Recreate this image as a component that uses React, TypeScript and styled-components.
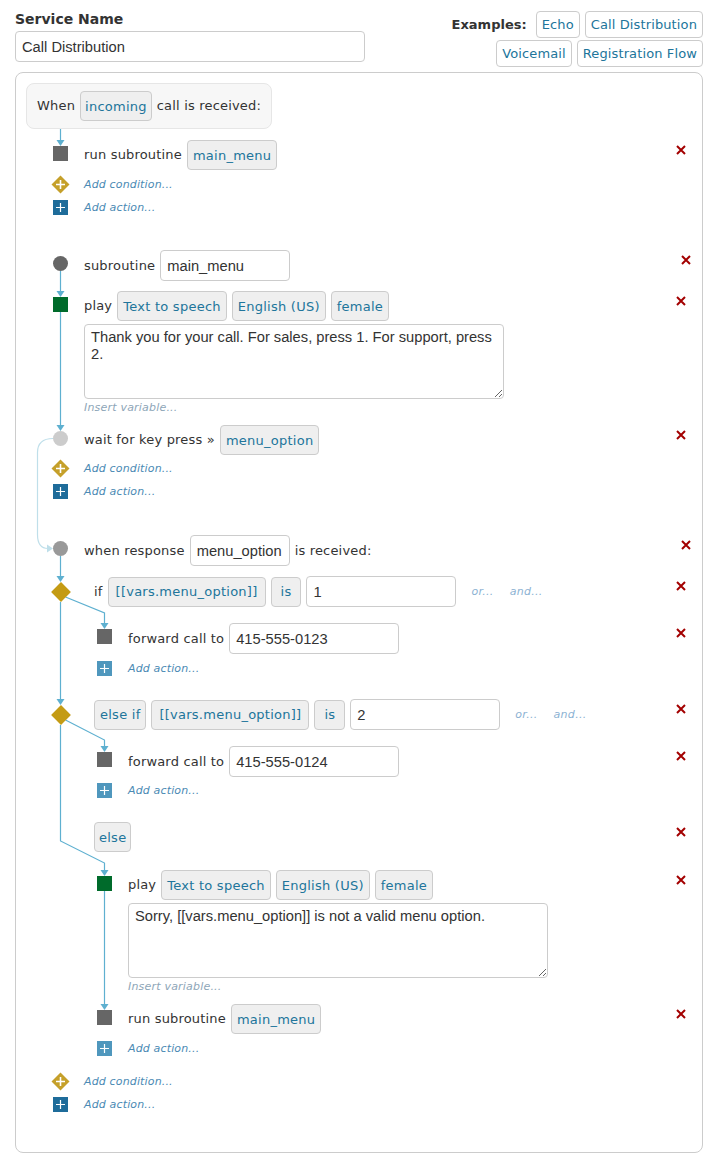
import { useLayoutEffect, useRef, useState } from 'react';
import styled, { createGlobalStyle } from 'styled-components';

type Box = { cx: number; cy: number; top: number; bottom: number; left: number; right: number };
type Wire = { d: string; light?: boolean; solid?: boolean };

const LINE = '#5eb0d0';
const LOOP = '#bfdfea';

const RemoveButton = ({ $r = 6 }: { $r?: number }) => (
  <Remove $r={$r}>
    <svg width="10" height="10" viewBox="0 0 10 10">
      <path d="M1 1L9 9M9 1L1 9" stroke="#a30000" strokeWidth="2" />
    </svg>
  </Remove>
);

const AddCondition = ({ left, mt }: { left: number; mt: number }) => (
  <AddRow $mt={mt}>
    <Slot $left={left} $right={11}>
      <svg width="19" height="19" viewBox="0 0 19 19">
        <polygon points="9.5,0.5 18.5,9.5 9.5,18.5 0.5,9.5" fill="#c5a02a" />
        <path d="M9.5 5V14M5 9.5H14" stroke="#fff" strokeWidth="1.6" />
      </svg>
    </Slot>
    <AddText>Add condition...</AddText>
  </AddRow>
);

const AddAction = ({ left, mt, pale }: { left: number; mt: number; pale?: boolean }) => (
  <AddRow $mt={mt}>
    <Slot $left={left} $right={11}>
      <svg width="15" height="15" viewBox="0 0 15 15">
        <rect width="15" height="15" fill={pale ? '#4f97bd' : '#1e6c9a'} />
        <path d="M7.5 3V12M3 7.5H12" stroke="#fff" strokeWidth="1.2" />
      </svg>
    </Slot>
    <AddText>Add action...</AddText>
  </AddRow>
);

const App = () => {
  const panelRef = useRef<HTMLDivElement>(null);
  const [wires, setWires] = useState<Wire[]>([]);

  useLayoutEffect(() => {
    const panel = panelRef.current;
    if (!panel) return;
    const base = panel.getBoundingClientRect();
    const ox = base.left + panel.clientLeft;
    const oy = base.top + panel.clientTop;
    const m = (id: string): Box => {
      const el = panel.querySelector(`[data-node="${id}"]`) as HTMLElement;
      const r = el.getBoundingClientRect();
      return {
        cx: r.left + r.width / 2 - ox,
        cy: r.top + r.height / 2 - oy,
        top: r.top - oy,
        bottom: r.bottom - oy,
        left: r.left - ox,
        right: r.right - ox,
      };
    };
    const px = (n: number) => Math.floor(n) + 0.5;
    const out: Wire[] = [];
    const arrow = (x: number, y: number) =>
      out.push({ d: `M${x - 4} ${y - 6}L${x + 4} ${y - 6}L${x} ${y}Z`, solid: true });
    const down = (a: Box, b: Box) => {
      const x = px(b.cx);
      out.push({ d: `M${x} ${a.bottom}V${b.top - 6}` });
      arrow(x, b.top);
    };
    const branch = (a: Box, b: Box, bend: number) => {
      const x = px(b.cx);
      out.push({ d: `M${a.cx + 5} ${a.cy + 5}L${x} ${bend}V${b.top - 6}` });
      arrow(x, b.top);
    };

    const trigger = m('trigger');
    const run1 = m('run1');
    out.push({ d: `M${px(run1.cx)} ${trigger.bottom}V${run1.top - 6}` });
    arrow(px(run1.cx), run1.top);

    const sub = m('sub');
    const play1 = m('play1');
    const wait = m('wait');
    const when = m('when');
    const if1 = m('if1');
    const fwd1 = m('fwd1');
    const elif = m('elif');
    const fwd2 = m('fwd2');
    const elseChip = m('else');
    const play2 = m('play2');
    const run2 = m('run2');

    down(sub, play1);
    down(play1, wait);

    const lx = wait.cx - 23;
    out.push({
      d: `M${wait.left} ${wait.cy}Q${lx} ${wait.cy} ${lx} ${wait.cy + 14}V${when.cy - 14}Q${lx} ${when.cy} ${when.left - 5} ${when.cy}`,
      light: true,
    });
    out.push({
      d: `M${when.left - 6} ${when.cy - 4}L${when.left - 6} ${when.cy + 4}L${when.left} ${when.cy}Z`,
      light: true,
      solid: true,
    });

    down(when, if1);
    branch(if1, fwd1, fwd1.top - 16);
    down(if1, elif);
    branch(elif, fwd2, fwd2.top - 12);

    const x0 = px(elif.cx);
    const x1 = px(play2.cx);
    const bend = elseChip.top + 19;
    out.push({ d: `M${x0} ${elif.bottom}V${bend}L${x1} ${play2.top - 13}V${play2.top - 6}` });
    arrow(x1, play2.top);
    down(play2, run2);

    setWires(out);
  }, []);

  return (
    <Page>
      <GlobalStyle />
      <Header>
        <NameColumn>
          <FieldLabel>Service Name</FieldLabel>
          <NameInput defaultValue="Call Distribution" />
        </NameColumn>
        <Examples>
          <ExamplesLabel>Examples:</ExamplesLabel>
          <ExampleButton>Echo</ExampleButton>
          <ExampleButton>Call Distribution</ExampleButton>
          <ExampleButton>Voicemail</ExampleButton>
          <ExampleButton>Registration Flow</ExampleButton>
        </Examples>
      </Header>

      <Panel ref={panelRef}>
        <Wires aria-hidden="true">
          {wires.map((w, i) => {
            const color = w.light ? LOOP : LINE;
            return (
              <path
                key={i}
                d={w.d}
                fill={w.solid ? color : 'none'}
                stroke={w.solid ? 'none' : color}
                strokeWidth={1.2}
              />
            );
          })}
        </Wires>

        <Trigger data-node="trigger">
          <Label>When</Label>
          <Chip $pad={4}>incoming</Chip>
          <Label>call is received:</Label>
        </Trigger>

        <Row $mt={11}>
          <Slot $left={27} $right={11} $top={6}>
            <Node $kind="square" data-node="run1" />
          </Slot>
          <Label>run subroutine</Label>
          <Chip>main_menu</Chip>
          <RemoveButton />
        </Row>
        <AddCondition left={27} mt={3} />
        <AddAction left={27} mt={0} />

        <Row $mt={31}>
          <Slot $left={27} $right={11} $top={6}>
            <Node $kind="circle" data-node="sub" />
          </Slot>
          <Label>subroutine</Label>
          <TextInput $w={130} defaultValue="main_menu" />
          <RemoveButton $r={1} />
        </Row>

        <Row $mt={10}>
          <Slot $left={27} $right={11} $top={6}>
            <Node $kind="green" data-node="play1" />
          </Slot>
          <Label>play</Label>
          <Chip>Text to speech</Chip>
          <Chip>English (US)</Chip>
          <Chip>female</Chip>
          <RemoveButton />
        </Row>
        <Indented $pad={58}>
          <Speech defaultValue="Thank you for your call. For sales, press 1. For support, press 2." />
          <Hint>Insert variable...</Hint>
        </Indented>

        <Row $mt={10}>
          <Slot $left={27} $right={11} $top={6}>
            <Node $kind="pale" data-node="wait" />
          </Slot>
          <Label>wait for key press »</Label>
          <Chip>menu_option</Chip>
          <RemoveButton />
        </Row>
        <AddCondition left={27} mt={2} />
        <AddAction left={27} mt={0} />

        <Row $mt={32}>
          <Slot $left={27} $right={11} $top={6}>
            <Node $kind="mid" data-node="when" />
          </Slot>
          <Label>when response</Label>
          <TextInput $w={100} defaultValue="menu_option" />
          <Label>is received:</Label>
          <RemoveButton $r={1} />
        </Row>

        <Row $mt={10}>
          <Slot $left={27} $right={21} $top={6}>
            <Node $kind="diamond" data-node="if1" />
          </Slot>
          <Label>if</Label>
          <Chip $pad={7}>[[vars.menu_option]]</Chip>
          <Chip $pad={9}>is</Chip>
          <TextInput $w={150} defaultValue="1" />
          <Joiner>or...</Joiner>
          <Joiner>and...</Joiner>
          <RemoveButton />
        </Row>
        <Row $mt={16}>
          <Slot $left={71} $right={11} $top={6}>
            <Node $kind="square" data-node="fwd1" />
          </Slot>
          <Label>forward call to</Label>
          <TextInput $w={170} defaultValue="415-555-0123" />
          <RemoveButton />
        </Row>
        <AddAction left={71} mt={3} pale />

        <Row $mt={19}>
          <Slot $left={27} $right={21} $top={6}>
            <Node $kind="diamond" data-node="elif" />
          </Slot>
          <Chip>else if</Chip>
          <Chip $pad={7}>[[vars.menu_option]]</Chip>
          <Chip $pad={9}>is</Chip>
          <TextInput $w={150} defaultValue="2" />
          <Joiner>or...</Joiner>
          <Joiner>and...</Joiner>
          <RemoveButton />
        </Row>
        <Row $mt={16}>
          <Slot $left={71} $right={11} $top={6}>
            <Node $kind="square" data-node="fwd2" />
          </Slot>
          <Label>forward call to</Label>
          <TextInput $w={170} defaultValue="415-555-0124" />
          <RemoveButton />
        </Row>
        <AddAction left={71} mt={2} pale />

        <Row $mt={20}>
          <Gutter $w={68} />
          <Chip $pad={4} data-node="else">else</Chip>
          <RemoveButton />
        </Row>

        <Row $mt={18}>
          <Slot $left={71} $right={11} $top={6}>
            <Node $kind="green" data-node="play2" />
          </Slot>
          <Label>play</Label>
          <Chip>Text to speech</Chip>
          <Chip>English (US)</Chip>
          <Chip>female</Chip>
          <RemoveButton />
        </Row>
        <Indented $pad={102}>
          <Speech defaultValue="Sorry, [[vars.menu_option]] is not a valid menu option." />
          <Hint>Insert variable...</Hint>
        </Indented>

        <Row $mt={10}>
          <Slot $left={71} $right={11} $top={6}>
            <Node $kind="square" data-node="run2" />
          </Slot>
          <Label>run subroutine</Label>
          <Chip>main_menu</Chip>
          <RemoveButton />
        </Row>
        <AddAction left={71} mt={3} pale />

        <AddCondition left={27} mt={10} />
        <AddAction left={27} mt={0} />
      </Panel>
    </Page>
  );
};

export default App;

const GlobalStyle = createGlobalStyle`
  * {
    box-sizing: border-box;
  }
  body {
    margin: 0;
    background: #fff;
    color: #333;
    font-family: 'DejaVu Sans', Verdana, sans-serif;
    font-size: 13px;
  }
`;

const Page = styled.div`
  width: 713px;
  padding: 11px 10px 5px 15px;
`;

const Header = styled.div`
  display: flex;
  justify-content: space-between;
  align-items: flex-start;
`;

const NameColumn = styled.div`
  display: flex;
  flex-direction: column;
  gap: 4px;
  width: 350px;
`;

const FieldLabel = styled.div`
  font-weight: bold;
  font-size: 14px;
  line-height: 16px;
  color: #333;
`;

const NameInput = styled.input`
  width: 350px;
  height: 31px;
  padding: 0 6px;
  border: 1px solid #ccc;
  border-radius: 4px;
  font-family: 'Liberation Sans', Arial, sans-serif;
  font-size: 14.7px;
  color: #333;
  outline: none;
`;

const Examples = styled.div`
  width: 262px;
  display: flex;
  flex-wrap: wrap;
  justify-content: flex-end;
  align-items: center;
  gap: 2px 5px;
`;

const ExamplesLabel = styled.span`
  font-weight: bold;
  font-size: 13px;
  color: #333;
  margin-right: 4px;
`;

const ExampleButton = styled.button`
  height: 27px;
  padding: 0 5px;
  background: #fff;
  border: 1px solid #ccc;
  border-radius: 4px;
  font-family: 'DejaVu Sans', Verdana, sans-serif;
  font-size: 13px;
  letter-spacing: 0.12px;
  color: #21759b;
  cursor: pointer;
`;

const Panel = styled.div`
  position: relative;
  margin-top: 5px;
  border: 1px solid #ccc;
  border-radius: 8px;
  padding: 10px 10px 36px;
`;

const Wires = styled.svg`
  position: absolute;
  left: 0;
  top: 0;
  width: 100%;
  height: 100%;
  overflow: visible;
  pointer-events: none;
`;

const Trigger = styled.div`
  display: inline-flex;
  align-items: center;
  gap: 5px;
  padding: 7px 10px;
  background: #f7f7f7;
  border: 1px solid #e6e6e6;
  border-radius: 8px;
`;

const Row = styled.div<{ $mt: number }>`
  display: flex;
  align-items: center;
  gap: 5px;
  margin-top: ${(p) => p.$mt}px;
`;

const AddRow = styled(Row)`
  height: 23px;
`;

const Slot = styled.div<{ $left: number; $right: number; $top?: number }>`
  flex: 0 0 15px;
  width: 15px;
  display: flex;
  justify-content: center;
  margin-left: ${(p) => p.$left}px;
  margin-right: ${(p) => p.$right}px;
  ${(p) => (p.$top !== undefined ? `align-self: flex-start; margin-top: ${p.$top}px;` : '')}

  svg {
    display: block;
    flex: none;
  }
`;

const Gutter = styled.div<{ $w: number }>`
  flex: 0 0 ${(p) => p.$w - 5}px;
`;

const nodeColors: Record<string, string> = {
  square: '#666',
  green: '#006b2b',
  circle: '#666',
  pale: '#ccc',
  mid: '#999',
  diamond: '#c49b14',
};

const Node = styled.span<{ $kind: string }>`
  display: block;
  flex: none;
  background: ${(p) => nodeColors[p.$kind]};
  width: ${(p) => (p.$kind === 'diamond' ? 14 : 15)}px;
  height: ${(p) => (p.$kind === 'diamond' ? 14 : 15)}px;
  border-radius: ${(p) => (['circle', 'pale', 'mid'].includes(p.$kind) ? '50%' : '0')};
  ${(p) => (p.$kind === 'diamond' ? 'transform: rotate(45deg); margin-top: 3px;' : '')}
`;

const Label = styled.span`
  font-size: 13px;
  line-height: 16px;
  letter-spacing: 0.18px;
  color: #333;
  white-space: nowrap;
`;

const Chip = styled.span<{ $pad?: number }>`
  display: inline-flex;
  align-items: center;
  height: 30px;
  padding: 0 ${(p) => p.$pad ?? 5}px;
  background: #efefef;
  border: 1px solid #ccc;
  border-radius: 4px;
  font-size: 13px;
  letter-spacing: 0.25px;
  color: #21759b;
  white-space: nowrap;
`;

const TextInput = styled.input<{ $w: number }>`
  width: ${(p) => p.$w}px;
  height: 31px;
  padding: 0 6px;
  border: 1px solid #ccc;
  border-radius: 4px;
  font-family: 'Liberation Sans', Arial, sans-serif;
  font-size: 14.7px;
  color: #333;
  outline: none;
`;

const Joiner = styled.span`
  margin-left: 10px;
  padding-right: 1px;
  font-size: 11px;
  font-style: italic;
  letter-spacing: 0.3px;
  color: #8cb2d3;
`;

const Remove = styled.span<{ $r: number }>`
  margin-left: auto;
  margin-right: ${(p) => p.$r}px;
  align-self: flex-start;
  margin-top: 5px;
  line-height: 0;
  cursor: pointer;

  svg {
    display: block;
  }
`;

const Indented = styled.div<{ $pad: number }>`
  display: flex;
  flex-direction: column;
  align-items: flex-start;
  padding-left: ${(p) => p.$pad}px;
  margin-top: 3px;
`;

const Speech = styled.textarea`
  width: 420px;
  height: 75px;
  padding: 4px 6px;
  border: 1px solid #ccc;
  border-radius: 4px;
  font-family: 'Liberation Sans', Arial, sans-serif;
  font-size: 14.7px;
  line-height: 17px;
  color: #333;
  outline: none;
`;

const Hint = styled.span`
  margin-top: 2px;
  font-size: 11px;
  line-height: 14px;
  font-style: italic;
  letter-spacing: 0.2px;
  color: #8ea6b8;
`;

const AddText = styled.span`
  font-size: 11px;
  font-style: italic;
  letter-spacing: 0.15px;
  color: #4b8ab4;
  cursor: pointer;
`;
